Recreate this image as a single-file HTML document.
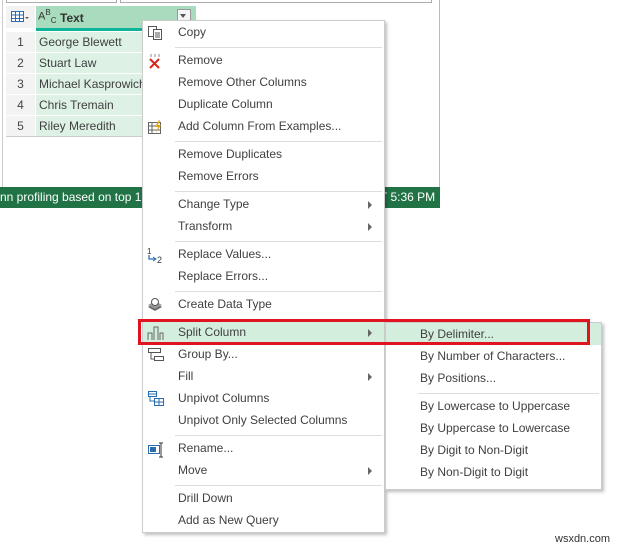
<!DOCTYPE html>
<html><head><style>
body{margin:0;width:622px;height:548px;background:#fff;position:relative;overflow:hidden;font-family:"Liberation Sans","DejaVu Sans",sans-serif;font-size:12px;color:#404040}
.a{position:absolute}
.it{position:absolute;left:35px;white-space:nowrap;margin-top:-1px}
.sep{position:absolute;left:32px;right:2px;height:1px;background:#ddd}
.arr{position:absolute;left:225px;width:0;height:0;border-left:4px solid #666;border-top:4px solid transparent;border-bottom:4px solid transparent}
.num{position:absolute;left:6px;width:29px;text-align:center;background:#f3f3f3;color:#444}
.cell{position:absolute;left:36px;width:160px;background:#ddf1e5;padding-left:3px;box-sizing:border-box}
</style></head><body>
<div class="a" style="left:0;top:0;width:439px;height:208px;border-right:1px solid #bbb;background:#fff"></div>
<div class="a" style="left:6px;top:0;width:109px;height:2px;border:1px solid #aaa;border-top:none"></div>
<div class="a" style="left:120px;top:0;width:310px;height:2px;border:1px solid #aaa;border-top:none"></div>
<div class="a" style="left:2px;top:0;width:1px;height:187px;background:#ccc"></div>
<div class="a" style="left:6px;top:6px;width:29px;height:22px;background:#f3f3f3"></div>
<svg class="a" style="left:11px;top:11px" width="20" height="12"><rect x="0.5" y="0.5" width="12" height="10" fill="#fff" stroke="#2b6cb0"/><path d="M0 4h13M0 7.5h13M4.5 1v10M8.5 1v10" stroke="#2b6cb0" stroke-width="1"/><path d="M14 6l2 2 2-2z" fill="#555"/></svg>
<div class="a" style="left:36px;top:6px;width:160px;height:22px;background:#a9dcbe"></div>
<div class="a" style="left:38px;top:8px;font-size:11px;color:#333">A<sup style="font-size:8px">B</sup><sub style="font-size:8px">C</sub></div>
<div class="a" style="left:60px;top:11px;font-weight:bold;color:#333">Text</div>
<div class="a" style="left:177px;top:9px;width:12px;height:12px;border:1px solid #999;background:#f5f5f5"></div>
<div class="a" style="left:180px;top:14px;border-top:4px solid #555;border-left:3px solid transparent;border-right:3px solid transparent"></div>
<div class="a" style="left:36px;top:28px;width:160px;height:3px;background:#0fb39a"></div>
<div class="num" style="top:32px;height:20px;line-height:20px">1</div><div class="cell" style="top:32px;height:20px;line-height:20px">George Blewett</div>
<div class="num" style="top:53px;height:20px;line-height:20px">2</div><div class="cell" style="top:53px;height:20px;line-height:20px">Stuart Law</div>
<div class="num" style="top:74px;height:20px;line-height:20px">3</div><div class="cell" style="top:74px;height:20px;line-height:20px">Michael Kasprowich</div>
<div class="num" style="top:95px;height:20px;line-height:20px">4</div><div class="cell" style="top:95px;height:20px;line-height:20px">Chris Tremain</div>
<div class="num" style="top:116px;height:20px;line-height:20px">5</div><div class="cell" style="top:116px;height:20px;line-height:20px">Riley Meredith</div>
<div class="a" style="left:6px;top:136px;width:190px;height:1px;background:#ccc"></div>
<div class="a" style="left:0;top:187px;width:440px;height:21px;background:#217346;color:#fff;line-height:21px;font-size:12px"><span style="position:absolute;left:0">nn profiling based on top 1000 rows</span><span style="position:absolute;left:380px">T 5:36 PM</span></div>

<div class="a" style="left:142px;top:20px;width:241px;height:511px;background:#fff;border:1px solid #ccc;box-shadow:2px 2px 3px rgba(0,0,0,.25)">
<div class="a" style="left:0;top:301px;width:241px;height:22px;background:#d3eedd"></div>
<div class="it" style="top:5px">Copy</div>
<div class="sep" style="top:26px"></div>
<div class="it" style="top:33px">Remove</div>
<div class="it" style="top:55px">Remove Other Columns</div>
<div class="it" style="top:77px">Duplicate Column</div>
<div class="it" style="top:99px">Add Column From Examples...</div>
<div class="sep" style="top:120px"></div>
<div class="it" style="top:127px">Remove Duplicates</div>
<div class="it" style="top:149px">Remove Errors</div>
<div class="sep" style="top:170px"></div>
<div class="it" style="top:177px">Change Type</div><div class="arr" style="top:180px"></div>
<div class="it" style="top:199px">Transform</div><div class="arr" style="top:202px"></div>
<div class="sep" style="top:220px"></div>
<div class="it" style="top:227px">Replace Values...</div>
<div class="it" style="top:249px">Replace Errors...</div>
<div class="sep" style="top:270px"></div>
<div class="it" style="top:277px">Create Data Type</div>
<div class="sep" style="top:298px"></div>
<div class="it" style="top:305px">Split Column</div><div class="arr" style="top:308px"></div>
<div class="it" style="top:327px">Group By...</div>
<div class="it" style="top:349px">Fill</div><div class="arr" style="top:352px"></div>
<div class="it" style="top:371px">Unpivot Columns</div>
<div class="it" style="top:393px">Unpivot Only Selected Columns</div>
<div class="sep" style="top:414px"></div>
<div class="it" style="top:421px">Rename...</div>
<div class="it" style="top:443px">Move</div><div class="arr" style="top:446px"></div>
<div class="sep" style="top:464px"></div>
<div class="it" style="top:471px">Drill Down</div>
<div class="it" style="top:493px">Add as New Query</div>
<svg class="a" style="left:4px;top:4px" width="16" height="16"><rect x="1.5" y="1.5" width="8" height="10" fill="#fff" stroke="#555"/><rect x="6.5" y="4.5" width="8" height="10" fill="#fff" stroke="#555"/><path d="M8 8h5M8 10h5M8 12h5" stroke="#555"/></svg>
<svg class="a" style="left:4px;top:32px" width="16" height="16"><path d="M4 1v3M8 1v3M12 1v3" stroke="#888"/><path d="M3 6l9 9M12 6l-9 9" stroke="#d9261c" stroke-width="2"/></svg>
<svg class="a" style="left:4px;top:98px" width="16" height="16"><rect x="1.5" y="3.5" width="12" height="11" fill="#fff" stroke="#666"/><path d="M1 7h12M1 11h12M5 4v10" stroke="#666"/><path d="M12 1l-4 7h3l-2 6 5-8h-3l2-5z" fill="#e8a317"/></svg>
<svg class="a" style="left:3px;top:226px" width="18" height="18"><text x="1" y="7" font-size="8" font-family="Liberation Sans" fill="#333">1</text><text x="11" y="16" font-size="9" font-family="Liberation Sans" fill="#333">2</text><path d="M3 8v4h6" stroke="#2b6cb0" fill="none" stroke-width="1.3"/><path d="M7 10l3 2-3 2" stroke="#2b6cb0" fill="none"/></svg>
<svg class="a" style="left:4px;top:276px" width="16" height="16"><path d="M1 10l7 4 7-4-7-4z" fill="#666"/><path d="M1 8l7 4 7-4-7-4z" fill="#999"/><circle cx="8" cy="5" r="3.5" fill="#fff" stroke="#555"/></svg>
<svg class="a" style="left:4px;top:303px" width="18" height="18"><path d="M1 16V9h4v7M7 16V3h4v13M13 16V9h3v7" fill="none" stroke="#666"/></svg>
<svg class="a" style="left:4px;top:325px" width="18" height="18"><rect x="1.5" y="2.5" width="12" height="4" fill="none" stroke="#555"/><path d="M4 7v6h3" stroke="#555" fill="none"/><rect x="7.5" y="10.5" width="9" height="4" fill="none" stroke="#555"/></svg>
<svg class="a" style="left:4px;top:369px" width="18" height="18"><rect x="1.5" y="1.5" width="8" height="5" fill="#fff" stroke="#2b6cb0"/><rect x="7.5" y="8.5" width="9" height="7" fill="#fff" stroke="#2b6cb0"/><path d="M1 4h9M8 12h9M12 9v7" stroke="#2b6cb0"/><path d="M3 7v4h4" stroke="#2b6cb0" fill="none"/></svg>
<svg class="a" style="left:4px;top:420px" width="18" height="18"><rect x="1.5" y="4.5" width="11" height="8" fill="#fff" stroke="#2b6cb0"/><rect x="3" y="6" width="6" height="5" fill="#2b6cb0"/><path d="M14 2v14M12 2h4M12 16h4" stroke="#333"/></svg>
</div>

<div class="a" style="left:385px;top:322px;width:215px;height:166px;background:#fff;border:1px solid #ccc;box-shadow:2px 2px 3px rgba(0,0,0,.25)">
<div class="a" style="left:0;top:0;width:215px;height:22px;background:#d3eedd"></div>
<div class="it" style="left:34px;top:5px">By Delimiter...</div>
<div class="it" style="left:34px;top:27px">By Number of Characters...</div>
<div class="it" style="left:34px;top:49px">By Positions...</div>
<div class="sep" style="top:70px"></div>
<div class="it" style="left:34px;top:77px">By Lowercase to Uppercase</div>
<div class="it" style="left:34px;top:99px">By Uppercase to Lowercase</div>
<div class="it" style="left:34px;top:121px">By Digit to Non-Digit</div>
<div class="it" style="left:34px;top:143px">By Non-Digit to Digit</div>
</div>

<div class="a" style="left:138px;top:319px;width:446px;height:20px;border:3px solid #e0141e"></div>
<div class="a" style="left:555px;top:533px;font-size:11px;color:#333">wsxdn.com</div>
</body></html>
